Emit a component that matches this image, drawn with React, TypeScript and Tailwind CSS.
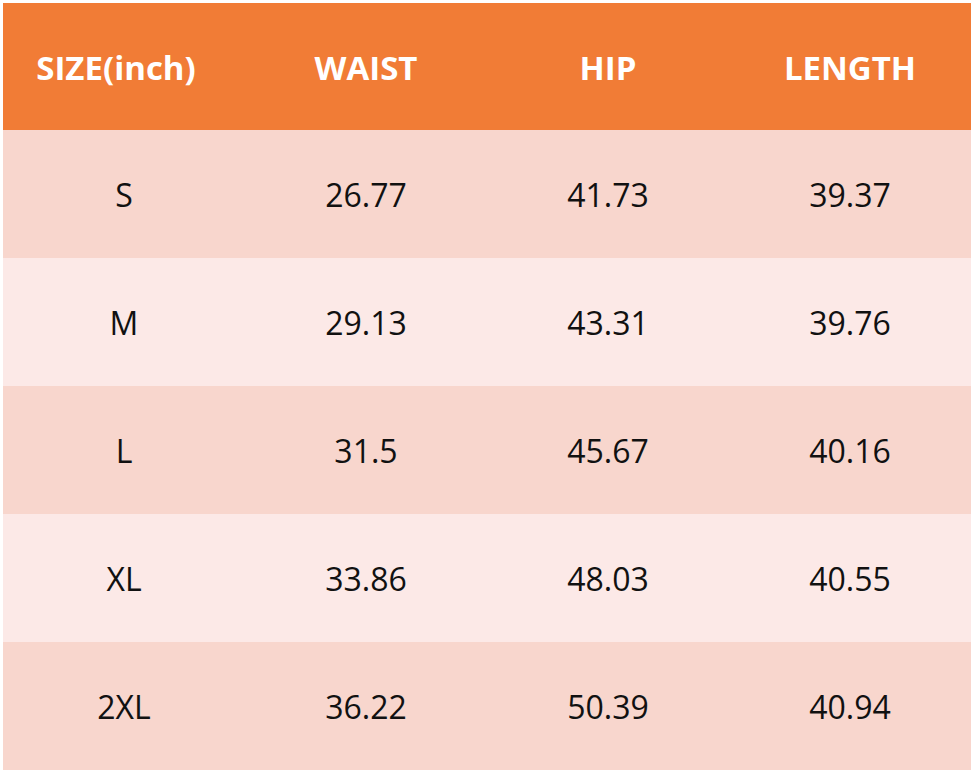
import React from "react";

const headers = ["SIZE(inch)", "WAIST", "HIP", "LENGTH"];

const rows: string[][] = [
  ["S", "26.77", "41.73", "39.37"],
  ["M", "29.13", "43.31", "39.76"],
  ["L", "31.5", "45.67", "40.16"],
  ["XL", "33.86", "48.03", "40.55"],
  ["2XL", "36.22", "50.39", "40.94"],
];

const App = () => {
  return (
    <div
      className="w-[975px] h-[774px] bg-white pt-[3px] pl-[3px]"
      style={{ fontFamily: '"Open Sans", "Noto Sans", sans-serif' }}
    >
      <div className="w-[968px] flex flex-col">
        {/* Header */}
        <div className="grid grid-cols-4 h-[127px] bg-[#f17c36] text-white font-bold text-[33px]">
          {headers.map((h, i) => (
            <div
              key={h}
              className={`flex items-center justify-center pt-[2px] ${i === 0 ? "pr-[16px]" : ""}`}
            >
              {h}
            </div>
          ))}
        </div>

        {/* Rows */}
        {rows.map((row, idx) => (
          <div
            key={row[0]}
            className={`grid grid-cols-4 h-[128px] text-[32px] text-[#111] ${
              idx % 2 === 0 ? "bg-[#f8d6cd]" : "bg-[#fce9e7]"
            }`}
          >
            {row.map((cell, i) => (
              <div key={i} className="flex items-center justify-center pt-[2px]">
                {cell}
              </div>
            ))}
          </div>
        ))}
      </div>
    </div>
  );
};

export default App;
